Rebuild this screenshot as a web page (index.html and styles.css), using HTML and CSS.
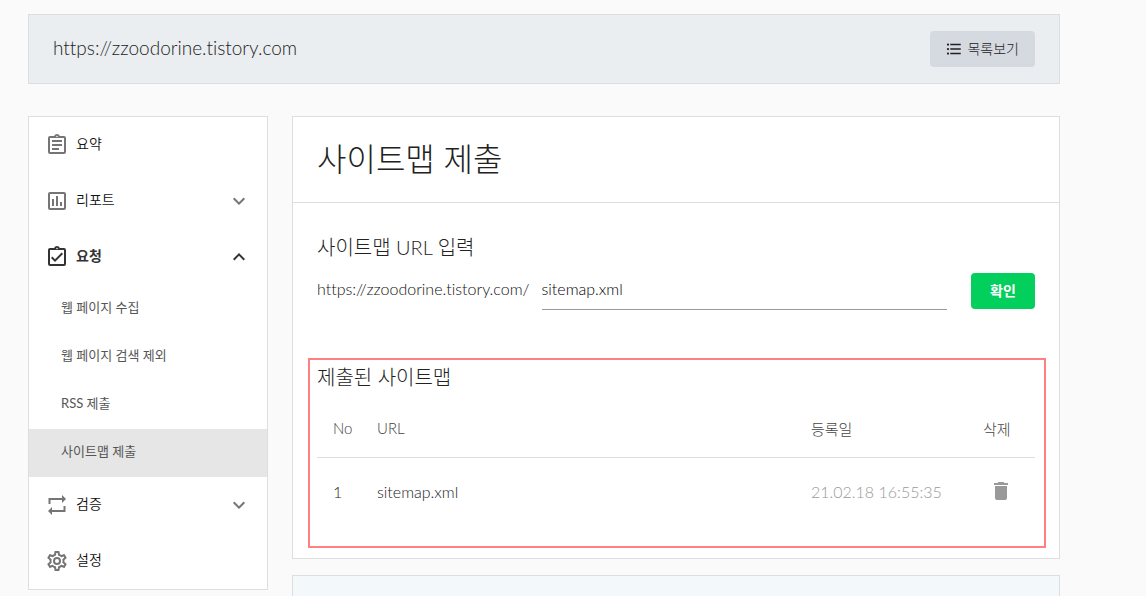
FILE: index.html
```html
<!DOCTYPE html>
<html lang="ko">
<head>
<meta charset="utf-8">
<title>사이트맵 제출</title>
<link rel="stylesheet" href="styles.css">
</head>
<body>
<div class="page">
  <header class="site-bar">
    <p class="site-url">https://zzoodorine.tistory.com</p>
    <button class="list-btn" type="button">
      <svg class="icon-small" viewBox="0 0 24 24" aria-hidden="true"><path d="M4 10.500a1.500 1.500 0 1 0 0 3 1.500 1.500 0 0 0 0-3zm0-6a1.500 1.500 0 1 0 0 3 1.500 1.500 0 0 0 0-3zm0 12a1.500 1.500 0 1 0 0 3 1.500 1.500 0 0 0 0-3zM7 19h14v-2H7v2zm0-6h14v-2H7v2zm0-8v2h14V5H7z"/></svg>
      <span class="btn-text">목록보기</span>
    </button>
  </header>
  <div class="columns">
    <nav class="side">
      <a class="item" href="#">
        <svg class="icon" viewBox="0 0 24 24" aria-hidden="true"><path d="M7 15h7v2H7zm0-4h10v2H7zm0-4h10v2H7zm12-4h-4.180C14.400 1.840 13.300 1 12 1s-2.400.84-2.820 2H5a2 2 0 0 0-2 2v14a2 2 0 0 0 2 2h14a2 2 0 0 0 2-2V5a2 2 0 0 0-2-2zm-7-.25a.75.75 0 1 1 0 1.500.75.75 0 0 1 0-1.500zM19 19H5V5h14v14z"/></svg>
        <span class="label">요약</span>
      </a>
      <a class="item" href="#">
        <svg class="icon" viewBox="0 0 24 24" aria-hidden="true"><path d="M19 3H5a2 2 0 0 0-2 2v14a2 2 0 0 0 2 2h14a2 2 0 0 0 2-2V5a2 2 0 0 0-2-2zm0 16H5V5h14v14zM7 10h2v7H7zm4-3h2v10h-2zm4 6h2v4h-2z"/></svg>
        <span class="label">리포트</span>
        <svg class="chevron" viewBox="0 0 24 24" aria-hidden="true"><path d="M7.410 8.590 12 13.170l4.590-4.580L18 10l-6 6-6-6z"/></svg>
      </a>
      <a class="item current" href="#">
        <svg class="icon" viewBox="0 0 24 24" aria-hidden="true"><path d="M19 3h-4.180C14.400 1.840 13.300 1 12 1s-2.400.84-2.820 2H5a2 2 0 0 0-2 2v14a2 2 0 0 0 2 2h14a2 2 0 0 0 2-2V5a2 2 0 0 0-2-2zm-7-.25a.75.75 0 1 1 0 1.500.75.75 0 0 1 0-1.500zM19 19H5V5h14v14zM18 9l-1.400-1.400-6.600 6.600-2.600-2.600L6 13l4 4z"/></svg>
        <span class="label">요청</span>
        <svg class="chevron" viewBox="0 0 24 24" aria-hidden="true"><path d="m12 8-6 6 1.410 1.410L12 10.830l4.590 4.580L18 14z"/></svg>
      </a>
      <a class="sub" href="#">웹 페이지 수집</a>
      <a class="sub" href="#">웹 페이지 검색 제외</a>
      <a class="sub" href="#">RSS 제출</a>
      <a class="sub selected" href="#" aria-current="page">사이트맵 제출</a>
      <a class="item" href="#">
        <svg class="icon" viewBox="0 0 24 24" aria-hidden="true"><path d="M5.500 7H17v3l4-4-4-4v3H3.500v6h2zM18.500 17H7v-3l-4 4 4 4v-3h13.500v-6h-2z"/></svg>
        <span class="label">검증</span>
        <svg class="chevron" viewBox="0 0 24 24" aria-hidden="true"><path d="M7.410 8.590 12 13.170l4.590-4.580L18 10l-6 6-6-6z"/></svg>
      </a>
      <a class="item" href="#">
        <svg class="icon" viewBox="0 0 24 24" aria-hidden="true"><path d="M19.430 12.980c.04-.32.07-.64.07-.98 0-.34-.03-.66-.07-.98l2.110-1.650c.19-.15.24-.42.12-.64l-2-3.460a.5.5 0 0 0-.61-.22l-2.490 1c-.52-.4-1.080-.73-1.690-.98l-.38-2.650A.488.488 0 0 0 14 2h-4c-.25 0-.46.18-.49.42l-.38 2.650c-.61.25-1.170.59-1.690.98l-2.490-1a.5.5 0 0 0-.61.22l-2 3.460c-.13.22-.07.49.12.64l2.110 1.650c-.04.32-.07.65-.07.98s.03.66.07.98l-2.110 1.650c-.19.15-.24.42-.12.64l2 3.460a.5.5 0 0 0 .61.22l2.490-1c.52.4 1.080.73 1.690.98l.38 2.650c.03.24.24.42.49.42h4c.25 0 .46-.18.49-.42l.38-2.650c.61-.25 1.170-.59 1.690-.98l2.490 1a.5.5 0 0 0 .61-.22l2-3.460c.12-.22.07-.49-.12-.64l-2.110-1.650zm-1.980-1.710c.04.31.05.52.05.73s-.02.43-.05.73l-.14 1.130.89.7 1.080.84-.7 1.210-1.270-.51-1.040-.42-.9.680c-.43.32-.84.56-1.250.73l-1.060.43-.16 1.130-.2 1.350h-1.400l-.19-1.350-.16-1.130-1.060-.43c-.43-.18-.83-.41-1.230-.71l-.91-.7-1.060.43-1.270.51-.7-1.210 1.080-.84.89-.7-.14-1.130c-.03-.31-.05-.54-.05-.74s.02-.43.05-.73l.14-1.130-.89-.7-1.080-.84.7-1.210 1.270.51 1.040.42.900-.68c.43-.32.84-.56 1.250-.73l1.060-.43.16-1.130.2-1.350h1.390l.19 1.350.16 1.130 1.060.43c.43.18.83.41 1.230.71l.91.7 1.060-.43 1.270-.51.7 1.210-1.070.85-.89.7.14 1.130zM12 8a4 4 0 1 0 0 8 4 4 0 0 0 0-8zm0 6a2 2 0 1 1 0-4 2 2 0 0 1 0 4z"/></svg>
        <span class="label">설정</span>
      </a>
    </nav>
    <main class="content">
      <section class="card">
        <h1 class="title">사이트맵 제출</h1>
        <form class="submit-form">
          <h2 class="subtitle"><label for="path">사이트맵 URL 입력</label></h2>
          <div class="field-row">
            <span class="prefix">https://zzoodorine.tistory.com/</span>
            <input class="path" id="path" type="text" value="sitemap.xml">
            <button class="confirm" type="button">확인</button>
          </div>
        </form>
        <section class="submitted">
          <h2 class="subtitle">제출된 사이트맵</h2>
          <table class="list">
            <thead>
              <tr><th class="col-no">No</th><th>URL</th><th class="col-date">등록일</th><th class="col-del">삭제</th></tr>
            </thead>
            <tbody>
              <tr>
                <td class="col-no">1</td>
                <td>sitemap.xml</td>
                <td class="col-date">21.02.18 16:55:35</td>
                <td class="col-del"><button class="delete" type="button" aria-label="삭제"><svg viewBox="0 0 24 24" aria-hidden="true"><path d="M6 19a2 2 0 0 0 2 2h8a2 2 0 0 0 2-2V7H6v12zM19 4h-3.500l-1-1h-5l-1 1H5v2h14V4z"/></svg></button></td>
              </tr>
            </tbody>
          </table>
        </section>
      </section>
      <aside class="help"></aside>
    </main>
  </div>
</div>
</body>
</html>
```
FILE: styles.css
```css
* { box-sizing: border-box; }
body {
  margin: 0;
  background: #fafafa;
  color: #222;
  font-family: Lato, "Noto Sans CJK KR", sans-serif;
  font-size: 14px;
  font-weight: 300;
  font-variant-ligatures: none;
}
h1, h2, p { margin: 0; font-weight: 300; }
button, input { font: inherit; color: inherit; }
a { color: inherit; text-decoration: none; }
svg { display: block; fill: currentColor; flex: none; }

.page {
  display: flex;
  flex-direction: column;
  max-width: 1146px;
  min-height: 100vh;
  padding: 14px 86px 0 28px;
}

.site-bar {
  display: flex;
  align-items: center;
  justify-content: space-between;
  padding: 16px 24px;
  border: 1px solid #dedede;
  background: #eaeef1;
}
.site-url { padding-bottom: 2px; font-size: 19px; line-height: 24px; color: #222; }
.list-btn {
  display: flex;
  align-items: center;
  gap: 4px;
  height: 36px;
  padding: 0 16px 0 15px;
  border: 0;
  border-radius: 4px;
  background: #d5d9e0;
  color: #222;
}
.btn-text { padding-bottom: 2px; }
.icon-small { width: 18px; height: 18px; }

.columns {
  display: grid;
  flex: 1;
  grid-template-columns: 240px minmax(0, 1fr);
  gap: 24px;
  margin-top: 32px;
}

.side { align-self: start; border: 1px solid #dedede; background: #fff; }
.item {
  display: flex;
  align-items: center;
  height: 56px;
  padding: 0 16px;
  color: #111;
  font-weight: 350;
}
.icon { width: 24px; height: 24px; margin-right: 7px; color: #757575; }
.label { flex: 1; padding-bottom: 4px; }
.chevron { width: 24px; height: 24px; color: #757575; }
.current { color: #333; font-weight: 700; }
.current .icon, .current .chevron { color: #333; }
.sub {
  display: flex;
  align-items: center;
  height: 48px;
  padding: 0 32px 5px;
  color: #555;
  font-size: 13px;
  font-weight: 400;
}
.selected { background: #e6e6e6; }

.content { display: flex; flex-direction: column; }
.card { border: 1px solid #dedede; background: #fff; }
.title {
  padding: 18px 24px 19px;
  border-bottom: 1px solid #dedede;
  font-size: 32px;
  line-height: 48px;
}
.submit-form { padding: 28px 24px 0; }
.subtitle { font-size: 20px; line-height: 32px; color: #222; }
.field-row { display: flex; align-items: center; margin-top: 9px; }
.prefix { padding-bottom: 6px; color: #111; font-size: 16px; }
.path {
  flex: 1;
  min-width: 0;
  height: 38px;
  margin: 0 24px 0 12px;
  padding: 0 0 5px;
  border: 0;
  border-bottom: 1px solid #999;
  background: none;
  color: #000;
  font-size: 16px;
}
.confirm {
  width: 64px;
  height: 36px;
  padding: 0 0 2px;
  border: 0;
  border-radius: 4px;
  background: #03cf5d;
  color: #fff;
  font-weight: 700;
}

.submitted {
  margin: 48px 13px 10px 15px;
  padding: 1px 9px 21px 7px;
  border: 2px solid #ff8080;
}
.list { width: 100%; margin-top: 7px; border-collapse: collapse; table-layout: fixed; }
.list th, .list td { padding: 0; text-align: left; font-weight: 300; }
.list th { height: 57px; border-bottom: 1px solid #dedede; color: #444; font-size: 15px; }
.list td { height: 68px; color: #222; font-size: 16px; }
.list .col-no { width: 60px; padding-left: 16px; }
.list .col-date { width: 172px; }
.list .col-del { width: 52px; }
.list td.col-date { color: #999; }
.delete { padding: 4px; margin-left: 2px; border: 0; background: none; color: #999; }
.delete svg { width: 24px; height: 24px; }

.help {
  flex: 1;
  margin-top: 16px;
  border: 1px solid #dedede;
  border-bottom: 0;
  background: #f3f8fb;
}
```
